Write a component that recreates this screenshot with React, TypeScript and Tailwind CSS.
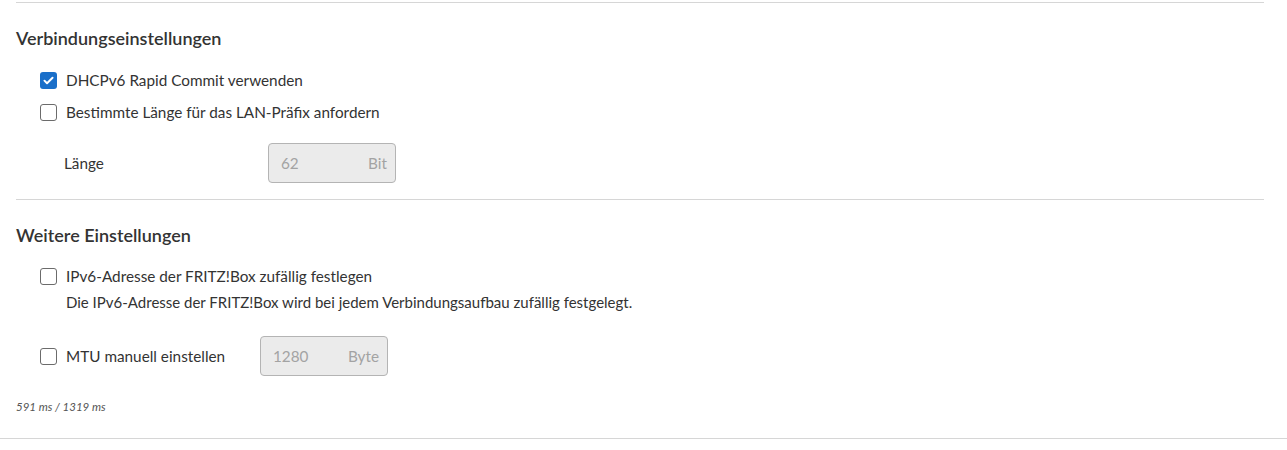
import React from "react";

const font = { fontFamily: "Lato, 'Noto Sans', sans-serif" };

// Checkbox im FRITZ!OS-Stil
const Check = ({ checked }: { checked?: boolean }) =>
  checked ? (
    <span className="w-[17px] h-[17px] rounded-[3px] bg-[#1a6fc9] flex items-center justify-center shrink-0">
      <svg viewBox="0 0 16 16" className="w-[13px] h-[13px]">
        <path d="M3 8.2l3.2 3.2L13 4.6" fill="none" stroke="#fff" strokeWidth="2.4" strokeLinecap="round" strokeLinejoin="round" />
      </svg>
    </span>
  ) : (
    <span className="w-[17px] h-[17px] rounded-[3px] border border-[#6b6b6b] bg-white shrink-0" />
  );

const UnitInput = ({ value, unit }: { value: string; unit: string }) => (
  <div className="w-[128px] h-[40px] rounded-[4px] border border-[#b4b4b4] bg-[#ebebeb] flex items-center justify-between pl-[12px] pr-[8px] text-[15.3px] text-[#a3a3a3]">
    <span>{value}</span>
    <span>{unit}</span>
  </div>
);

export default function App() {
  return (
    <div className="w-[1287px] h-[450px] bg-white text-[#333]" style={font}>
      <div className="pl-4 pr-[23px]">
        <div className="mt-[2px] border-t border-[#d6d6d6]" />

        <h2 className="mt-[23px] h-[24px] leading-[24px] text-[18px] font-semibold text-[#333]">Verbindungseinstellungen</h2>

        <div className="mt-[14px] pl-6 text-[15.3px]">
          <label className="h-[32px] flex items-center gap-[9px]">
            <Check checked />
            <span>DHCPv6 Rapid Commit verwenden</span>
          </label>
          <label className="h-[32px] flex items-center gap-[9px]">
            <Check />
            <span>Bestimmte Länge für das LAN-Präfix anfordern</span>
          </label>
        </div>

        <div className="mt-[15px] pl-12 h-[40px] flex items-center">
          <span className="w-[204px] text-[15.3px]">Länge</span>
          <UnitInput value="62" unit="Bit" />
        </div>

        <div className="mt-[16px] border-t border-[#d6d6d6]" />

        <h2 className="mt-[23px] h-[24px] leading-[24px] text-[18px] font-semibold text-[#333]">Weitere Einstellungen</h2>

        <div className="mt-[17px] pl-6 text-[15.3px]">
          <label className="h-[25px] flex items-center gap-[9px]">
            <Check />
            <span>IPv6-Adresse der FRITZ!Box zufällig festlegen</span>
          </label>
          <p className="pl-[26px] h-[26px] leading-[26px] text-[15px]">
            Die IPv6-Adresse der FRITZ!Box wird bei jedem Verbindungsaufbau zufällig festgelegt.
          </p>
        </div>

        <div className="mt-[21px] pl-6 h-[40px] flex items-center">
          <label className="w-[220px] flex items-center gap-[9px] text-[15.3px]">
            <Check />
            <span>MTU manuell einstellen</span>
          </label>
          <UnitInput value="1280" unit="Byte" />
        </div>

        <p className="mt-[24px] h-[14px] leading-[14px] text-[11.5px] italic text-[#555]">591 ms / 1319 ms</p>
      </div>

      <div className="mt-[24px] border-t border-[#d6d6d6]" />
    </div>
  );
}
